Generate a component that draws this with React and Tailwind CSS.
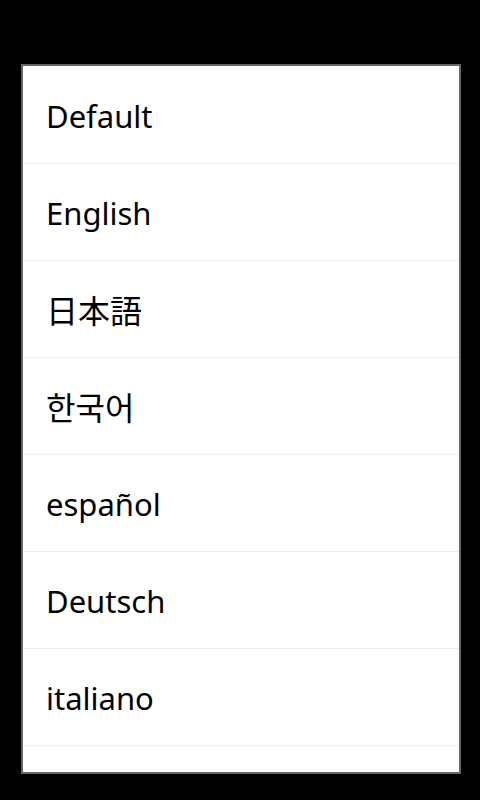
const languages = [
  { label: "Default" },
  { label: "English" },
  { label: "日本語", cjk: true },
  { label: "한국어", cjk: true },
  { label: "español" },
  { label: "Deutsch" },
  { label: "italiano" },
  { label: "" },
];

export default function App() {
  return (
    <div className="h-[800px] w-[480px] bg-black pl-[21px] pt-[64px]">
      <div className="h-[710px] w-[440px] overflow-hidden border-2 border-[#666] bg-white pt-px">
        <ul className="flex flex-col">
          {languages.map((lang, i) => (
            <li
              key={i}
              className={
                "flex h-[97px] shrink-0 items-center border-b border-[#eeeeee] pl-[23px] pt-[3px] leading-none text-black " +
                (lang.cjk ? "text-[32px]" : "text-[31px]")
              }
              style={{ fontFamily: '"Noto Sans", "Noto Sans CJK JP", "Noto Sans CJK KR", sans-serif' }}
            >
              {lang.label}
            </li>
          ))}
        </ul>
      </div>
    </div>
  );
}
